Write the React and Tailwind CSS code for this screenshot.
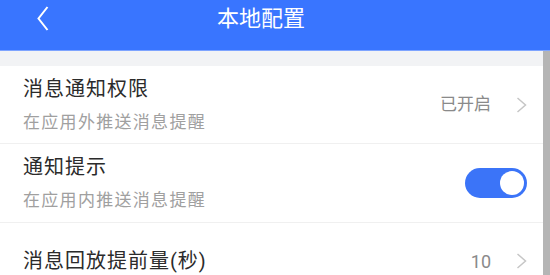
import React, { useState } from 'react';

const font = { fontFamily: 'Roboto, "Noto Sans CJK SC", sans-serif' };

function Chevron() {
  return (
    <svg width="11" height="16" viewBox="0 0 11 16" className="shrink-0">
      <polyline points="1.5,1 9.5,8 1.5,15" fill="none" stroke="#c6c6c6" strokeWidth="1.5" />
    </svg>
  );
}

function Toggle({ on, onChange }) {
  return (
    <button
      onClick={() => onChange(!on)}
      className={`w-[62px] h-[30px] rounded-full flex items-center px-[3px] ${on ? 'bg-[#3b74f8] justify-end' : 'bg-[#dcdcdc] justify-start'}`}
    >
      <span className="w-[24px] h-[24px] rounded-full bg-white block" />
    </button>
  );
}

export default function App() {
  const [notify, setNotify] = useState(true);

  return (
    <div className="w-[550px] h-[275px] overflow-hidden flex flex-col bg-white" style={font}>
      {/* header */}
      <div className="h-[51px] shrink-0 bg-[#3975ff] border-b border-[#7ea4ff] relative">
        <div className="h-[37px] flex items-center px-[37px]">
          <svg width="12" height="25" viewBox="0 0 12 25">
            <polyline points="10.5,1 1.5,12.5 10.5,24" fill="none" stroke="#ffffff" strokeWidth="2" />
          </svg>
          <div className="absolute left-0 right-[28px] top-0 h-[37px] flex items-center justify-center text-white text-[22px]">
            本地配置
          </div>
        </div>
      </div>

      <div className="flex-1 flex min-h-0">
        <div className="flex-1 flex flex-col">
          <div className="h-[15px] bg-[#f2f3f5] shrink-0" />

          {/* row 1 */}
          <div className="h-[78px] shrink-0 flex items-center pl-[23px] pr-[16px] border-b border-[#f0f0f0]">
            <div className="flex-1 flex flex-col gap-[10px]">
              <div className="text-[20px] leading-[24px] text-[#2b2b2b] tracking-[1px]">消息通知权限</div>
              <div className="text-[17px] leading-[22px] text-[#a0a0a0] tracking-[1.3px]">在应用外推送消息提醒</div>
            </div>
            <div className="flex items-center gap-[25px]">
              <span className="text-[17px] text-[#8a8a8a]">已开启</span>
              <Chevron />
            </div>
          </div>

          {/* row 2 */}
          <div className="h-[79px] shrink-0 flex items-center pl-[23px] pr-[16px] border-b border-[#f0f0f0]">
            <div className="flex-1 flex flex-col gap-[10px]">
              <div className="text-[20px] leading-[24px] text-[#2b2b2b] tracking-[1px]">通知提示</div>
              <div className="text-[17px] leading-[22px] text-[#a0a0a0] tracking-[1.3px]">在应用内推送消息提醒</div>
            </div>
            <Toggle on={notify} onChange={setNotify} />
          </div>

          {/* row 3 */}
          <div className="h-[77px] shrink-0 flex items-center pl-[23px] pr-[16px] border-b border-[#f0f0f0]">
            <div className="flex-1 text-[20px] leading-[24px] text-[#2b2b2b] tracking-[1px]">消息回放提前量(秒)</div>
            <div className="flex items-center gap-[25px]">
              <span className="text-[18px] text-[#8a8a8a]">10</span>
              <Chevron />
            </div>
          </div>
        </div>
        <div className="w-[7px] shrink-0 bg-[#b5b5b5]" />
      </div>
    </div>
  );
}
